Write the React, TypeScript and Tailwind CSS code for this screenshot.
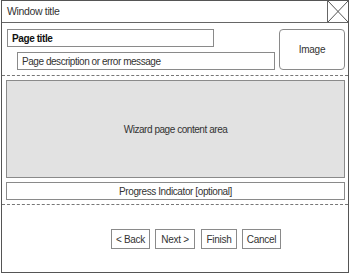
import React from "react";

const font = { fontFamily: '"Liberation Sans", Arial, sans-serif' };

function Btn({ label, w }: { label: string; w: string }) {
  return (
    <div className={`${w} h-[20px] border border-[#8a8a8a] bg-white flex items-center justify-center text-[10px] tracking-[-0.3px] text-[#333]`}>
      {label}
    </div>
  );
}

export default function App() {
  return (
    <div className="w-[350px] h-[274px] bg-white" style={font}>
      <div className="ml-[1px] w-[348px] h-[273px] border border-[#555] flex flex-col">
        {/* title bar */}
        <div className="h-[22px] border-b border-[#666] flex items-stretch">
          <div className="flex-1 flex items-center pl-[5px] text-[10.5px] tracking-[-0.35px] text-[#333]">Window title</div>
          <div className="w-[21px] border-l border-[#666] relative">
            <svg className="absolute inset-0" width="20" height="21" viewBox="0 0 20 21">
              <line x1="0" y1="0" x2="20" y2="21" stroke="#555" strokeWidth="1" />
              <line x1="20" y1="0" x2="0" y2="21" stroke="#555" strokeWidth="1" />
            </svg>
          </div>
        </div>
        {/* header */}
        <div className="flex pt-[6px] pl-[5px] pr-[3px] h-[52px]">
          <div className="flex-1 flex flex-col gap-[5px]">
            <div className="w-[207px] h-[18px] border border-[#8a8a8a] flex items-center pl-[4px] text-[10px] tracking-[-0.4px] font-bold text-[#111]">
              Page title
            </div>
            <div className="ml-[10px] w-[258px] h-[18px] border border-[#8a8a8a] flex items-center pl-[4px] text-[10px] tracking-[-0.45px] text-[#333]">
              Page description or error message
            </div>
          </div>
          <div className="w-[66px] h-[41px] border border-[#8a8a8a] rounded-[4px] flex items-center justify-center text-[10px] tracking-[-0.3px] text-[#333]">
            Image
          </div>
        </div>
        <div className="border-t border-dashed border-[#777]" />
        {/* content */}
        <div className="flex flex-col gap-[4px] pt-[4px] pl-[4px] pr-[3px] h-[128px]">
          <div className="h-[98px] border border-[#8a8a8a] bg-[#e2e2e2] flex items-center justify-center text-[10px] tracking-[-0.45px] text-[#333]">
            Wizard page content area
          </div>
          <div className="h-[18px] border border-[#8a8a8a] flex items-center justify-center text-[10px] tracking-[-0.4px] text-[#333]">
            Progress Indicator [optional]
          </div>
        </div>
        <div className="border-t border-dashed border-[#777]" />
        {/* buttons */}
        <div className="flex-1 flex justify-start pt-[24px] pl-[109px]">
          <Btn label="< Back" w="w-[39px]" />
          <div className="w-[5px]" />
          <Btn label="Next >" w="w-[40px]" />
          <div className="w-[6px]" />
          <Btn label="Finish" w="w-[36px]" />
          <div className="w-[5px]" />
          <Btn label="Cancel" w="w-[39px]" />
        </div>
      </div>
    </div>
  );
}
